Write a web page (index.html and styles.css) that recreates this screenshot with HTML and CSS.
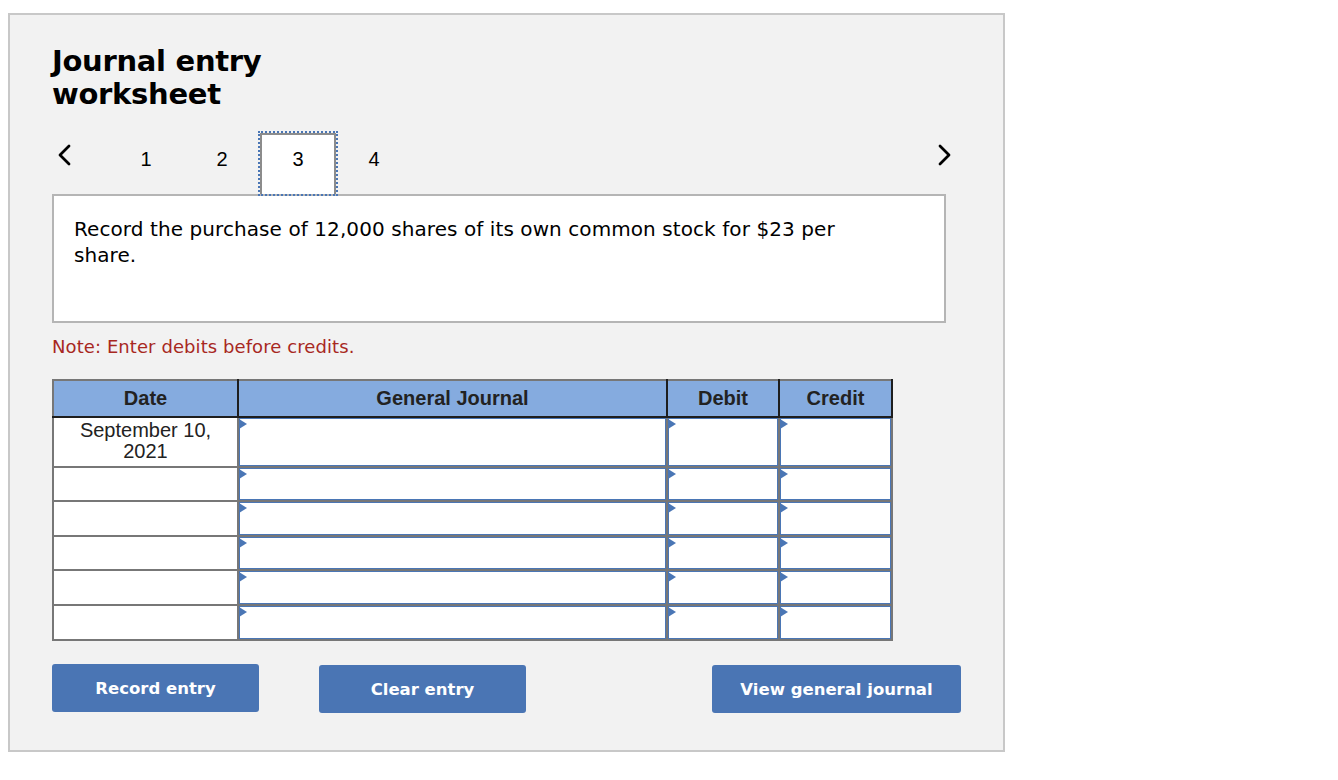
FILE: index.html
```html
<!DOCTYPE html>
<html>
<head>
<meta charset="utf-8">
<title>Journal entry worksheet</title>
<link rel="stylesheet" href="styles.css">
</head>
<body>
<div class="panel">
  <h1 class="title">Journal entry<br>worksheet</h1>

  <div class="tabs">
    <div class="nav nav-prev">
      <svg width="16" height="22" viewBox="0 0 16 22"><path d="M13 2 L4 11 L13 20" fill="none" stroke="#000" stroke-width="2.8" stroke-linecap="round" stroke-linejoin="round"/></svg>
    </div>
    <div class="tab">1</div>
    <div class="tab">2</div>
    <div class="tab active">3</div>
    <div class="tab">4</div>
    <div class="nav nav-next">
      <svg width="16" height="22" viewBox="0 0 16 22"><path d="M3 2 L12 11 L3 20" fill="none" stroke="#000" stroke-width="2.8" stroke-linecap="round" stroke-linejoin="round"/></svg>
    </div>
  </div>

  <div class="question">Record the purchase of 12,000 shares of its own common stock for $23 per share.</div>

  <p class="note">Note: Enter debits before credits.</p>

  <table class="journal">
    <colgroup>
      <col class="c-date"><col class="c-gj"><col class="c-dr"><col class="c-cr">
    </colgroup>
    <thead>
      <tr><th>Date</th><th>General Journal</th><th>Debit</th><th>Credit</th></tr>
    </thead>
    <tbody>
      <tr class="first">
        <td class="date">September 10,<br>2021</td>
        <td class="in"><div class="field"></div></td>
        <td class="in"><div class="field"></div></td>
        <td class="in"><div class="field"></div></td>
      </tr>
      <tr>
        <td class="date"></td>
        <td class="in"><div class="field"></div></td>
        <td class="in"><div class="field"></div></td>
        <td class="in"><div class="field"></div></td>
      </tr>
      <tr>
        <td class="date"></td>
        <td class="in"><div class="field"></div></td>
        <td class="in"><div class="field"></div></td>
        <td class="in"><div class="field"></div></td>
      </tr>
      <tr>
        <td class="date"></td>
        <td class="in"><div class="field"></div></td>
        <td class="in"><div class="field"></div></td>
        <td class="in"><div class="field"></div></td>
      </tr>
      <tr>
        <td class="date"></td>
        <td class="in"><div class="field"></div></td>
        <td class="in"><div class="field"></div></td>
        <td class="in"><div class="field"></div></td>
      </tr>
      <tr>
        <td class="date"></td>
        <td class="in"><div class="field"></div></td>
        <td class="in"><div class="field"></div></td>
        <td class="in"><div class="field"></div></td>
      </tr>
    </tbody>
  </table>

  <div class="actions">
    <button class="btn">Record entry</button>
    <button class="btn btn-clear">Clear entry</button>
    <button class="btn btn-view">View general journal</button>
  </div>
</div>
</body>
</html>
```
FILE: styles.css
```css
html, body {
  margin: 0;
  padding: 0;
  background: #fff;
}

body {
  font-family: "DejaVu Sans", Verdana, sans-serif;
  color: #000;
}

.panel {
  box-sizing: border-box;
  width: 997px;
  margin: 13px 0 0 8px;
  border: 2px solid #c8c8c8;
  background: #f2f2f2;
  padding: 30px 0 37px 42px;
}

.title {
  margin: 0;
  font-size: 29px;
  line-height: 33px;
  font-weight: bold;
  letter-spacing: -0.3px;
}

.tabs {
  display: flex;
  align-items: flex-start;
  width: 909px;
  margin-top: 22px;
  height: 61px;
}

.nav {
  width: 56px;
  padding-top: 11px;
  padding-left: 4px;
  box-sizing: border-box;
}

.nav-next {
  margin-left: auto;
  width: 20px;
  padding-left: 0;
  margin-right: 4px;
}

.tab {
  box-sizing: border-box;
  width: 76px;
  height: 61px;
  padding-top: 12px;
  text-align: center;
  font-family: "Liberation Sans", Arial, sans-serif;
  font-size: 20px;
  line-height: 24px;
  border: 2px solid transparent;
  border-bottom: 0;
}

.tab.active {
  background: #fff;
  border-color: #8c8c8c;
  outline: 2px dotted #4a76b5;
  position: relative;
  z-index: 1;
}

.question {
  box-sizing: border-box;
  width: 894px;
  height: 129px;
  border: 2px solid #b5b5b5;
  background: #fff;
  padding: 20px 50px 0 20px;
  font-size: 20px;
  line-height: 26px;
  letter-spacing: 0.08px;
}

.note {
  margin: 14px 0 0;
  color: #a8281f;
  font-size: 18px;
  line-height: 20px;
  letter-spacing: 0.08px;
}

.journal {
  margin-top: 22px;
  border-collapse: collapse;
  table-layout: fixed;
  width: 839px;
  font-family: "Liberation Sans", Arial, sans-serif;
  color: #222;
}

.c-date { width: 185px; }
.c-gj { width: 429px; }
.c-dr { width: 112px; }
.c-cr { width: 113px; }

.journal th {
  background: #85abdf;
  border: 2px solid #1e1e1e;
  border-top-color: #777;
  height: 35px;
  padding: 0;
  font-size: 20px;
  font-weight: bold;
  text-align: center;
  vertical-align: middle;
}

.journal th:first-child {
  border-left-color: #777;
}

.journal td {
  border: 2px solid #777;
  background: #fff;
  padding: 0;
  vertical-align: top;
}

.journal td.date {
  text-align: center;
  font-size: 20px;
  line-height: 21px;
  padding-top: 2px;
}

.field {
  box-sizing: border-box;
  position: relative;
  height: 33px;
  border: 1px solid #4a76b5;
  background: #fff;
}

.first .field {
  height: 48px;
}

.journal tbody tr:nth-child(2) .field,
.journal tbody tr:nth-child(4) .field {
  height: 32px;
}

.field::before {
  content: "";
  position: absolute;
  left: -1px;
  top: 0;
  border-left: 8px solid #4a76b5;
  border-top: 5px solid transparent;
  border-bottom: 5px solid transparent;
}

.actions {
  display: flex;
  align-items: flex-start;
  width: 909px;
  margin-top: 23px;
}

.btn {
  box-sizing: border-box;
  width: 207px;
  height: 48px;
  border: 0;
  border-radius: 3px;
  background: #4a75b4;
  color: #fff;
  font-family: "DejaVu Sans", Verdana, sans-serif;
  font-size: 16.5px;
  font-weight: bold;
  padding: 0;
}

.btn-clear {
  margin-left: 60px;
  margin-top: 1px;
}

.btn-view {
  margin-left: auto;
  margin-top: 1px;
  width: 249px;
}
```
